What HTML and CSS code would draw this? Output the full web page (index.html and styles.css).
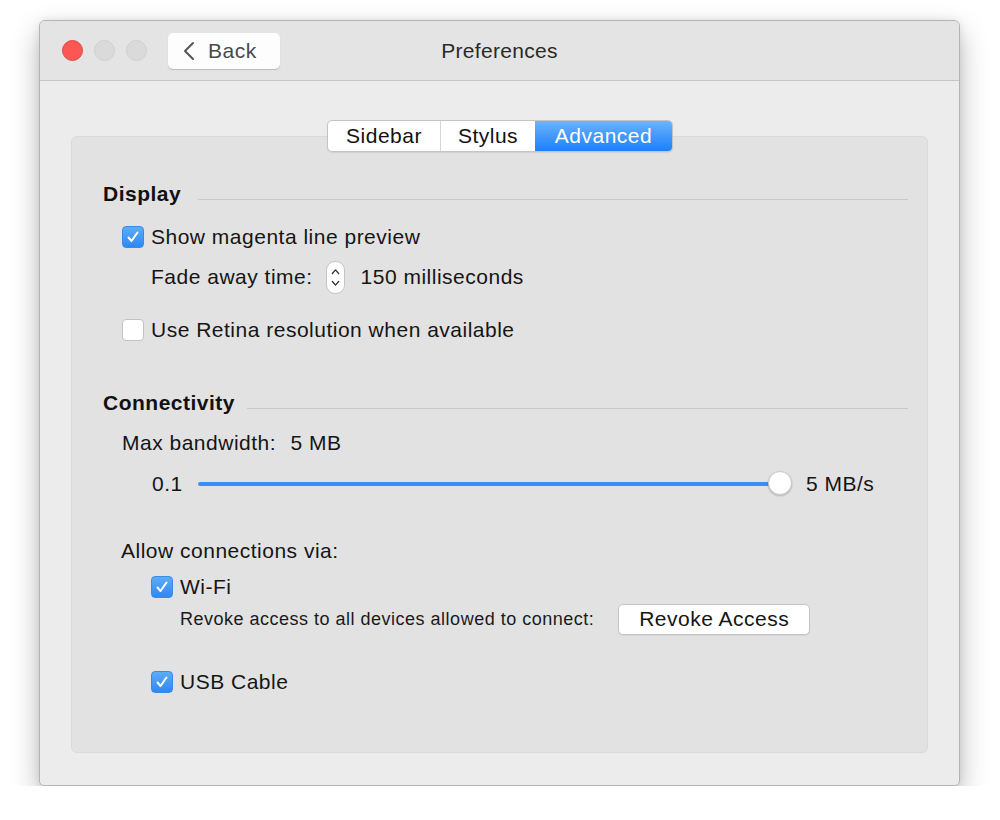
FILE: index.html
```html
<!DOCTYPE html>
<html lang="en">
<head>
  <meta charset="UTF-8">
  <title>Preferences</title>
  <link rel="stylesheet" href="styles.css">
</head>
<body>
  <div class="window">
    <!-- Title bar -->
    <div class="titlebar">
      <div class="lights">
        <span class="light red"></span>
        <span class="light"></span>
        <span class="light"></span>
      </div>
      <button class="back-btn">
        <svg width="12" height="20" viewBox="0 0 12 20"><path d="M10 2 L2 10 L10 18" fill="none" stroke="#555" stroke-width="2" stroke-linecap="round" stroke-linejoin="round"/></svg>
        Back
      </button>
      <div class="title">Preferences</div>
    </div>

    <div class="content">
      <div class="tabs">
        <div class="tab tab-sidebar">Sidebar</div>
        <div class="tab tab-stylus">Stylus</div>
        <div class="tab tab-advanced active">Advanced</div>
      </div>

      <div class="group">
        <div class="section-head">Display</div>

        <label class="check-row show-row">
          <span class="box checked"><svg width="14" height="14" viewBox="0 0 14 14"><path d="M2.5 7.5 L5.5 11 L11.5 2.5" fill="none" stroke="#fff" stroke-width="2" stroke-linecap="round" stroke-linejoin="round"/></svg></span>
          Show magenta line preview
        </label>

        <div class="fade-row">
          <span>Fade away time:</span>
          <span class="stepper">
            <svg width="19" height="33" viewBox="0 0 19 33"><path d="M6 12 L9.5 8 L13 12" fill="none" stroke="#333" stroke-width="1.5" stroke-linecap="round" stroke-linejoin="round"/><path d="M6 21 L9.5 25 L13 21" fill="none" stroke="#333" stroke-width="1.5" stroke-linecap="round" stroke-linejoin="round"/></svg>
          </span>
          <span>150 milliseconds</span>
        </div>

        <label class="check-row retina-row">
          <span class="box"></span>
          Use Retina resolution when available
        </label>

        <div class="section-head conn-head">Connectivity</div>

        <div class="bandwidth-row">Max bandwidth: <span class="bandwidth-value">5 MB</span></div>

        <div class="slider-row">
          <span class="slider-min">0.1</span>
          <span class="track"><span class="knob"></span></span>
          <span class="slider-max">5 MB/s</span>
        </div>

        <div class="allow-row">Allow connections via:</div>

        <label class="check-row wifi-row">
          <span class="box checked"><svg width="14" height="14" viewBox="0 0 14 14"><path d="M2.5 7.5 L5.5 11 L11.5 2.5" fill="none" stroke="#fff" stroke-width="2" stroke-linecap="round" stroke-linejoin="round"/></svg></span>
          Wi-Fi
        </label>

        <div class="revoke-row">
          <span class="revoke-text">Revoke access to all devices allowed to connect:</span>
          <button class="push-btn">Revoke Access</button>
        </div>

        <label class="check-row usb-row">
          <span class="box checked"><svg width="14" height="14" viewBox="0 0 14 14"><path d="M2.5 7.5 L5.5 11 L11.5 2.5" fill="none" stroke="#fff" stroke-width="2" stroke-linecap="round" stroke-linejoin="round"/></svg></span>
          USB Cable
        </label>
      </div>
    </div>
  </div>
</body>
</html>
```

FILE: styles.css
```css
body {
  margin: 0;
  background: #fff;
  font-family: "Liberation Sans", Arial, sans-serif;
  color: #1a1a1a;
  letter-spacing: 0.5px;
}

.window {
  margin: 20px 0 0 39px;
  width: 919px;
  height: 764px;
  border: 1px solid #b4b4b4;
  border-radius: 6px 6px 5px 5px;
  background: #ececec;
  box-shadow: 0 12px 28px rgba(0, 0, 0, 0.28), 0 0 8px rgba(0, 0, 0, 0.08);
  overflow: hidden;
  display: flex;
  flex-direction: column;
}

/* Title bar */
.titlebar {
  height: 59px;
  background: #e4e4e4;
  border-bottom: 1px solid #c6c6c6;
  display: flex;
  align-items: center;
  position: relative;
}

.lights {
  display: flex;
  gap: 11px;
  margin-left: 22px;
}

.light {
  width: 19px;
  height: 19px;
  border-radius: 50%;
  background: #dadada;
  border: 1px solid #cfcfcf;
}

.light.red {
  background: #fc5753;
  border-color: #df4744;
}

.back-btn {
  margin-left: 21px;
  width: 112px;
  height: 36px;
  background: #fdfdfd;
  border: none;
  border-radius: 5px;
  box-shadow: 0 1px 1px rgba(0, 0, 0, 0.18);
  display: flex;
  align-items: center;
  gap: 13px;
  padding: 0 0 0 15px;
  font-family: inherit;
  font-size: 21px;
  letter-spacing: 0.5px;
  color: #4a4a4a;
}

.title {
  position: absolute;
  left: 0;
  right: 0;
  text-align: center;
  font-size: 21px;
  letter-spacing: 0.3px;
  color: #2a2a2a;
  pointer-events: none;
}

/* Content */
.content {
  flex: 1;
  padding: 39px 31px 32px 31px;
  display: flex;
  flex-direction: column;
  align-items: center;
}

.tabs {
  display: flex;
  height: 30px;
  background: #fff;
  border: 1px solid #c4c4c4;
  border-radius: 5px;
  box-shadow: 0 1px 1px rgba(0, 0, 0, 0.08);
  position: relative;
  z-index: 1;
  overflow: hidden;
  margin-left: 1px;
}

.tab {
  font-size: 21px;
  line-height: 30px;
  text-align: center;
  color: #111;
}

.tab-sidebar {
  width: 112px;
}

.tab-stylus {
  width: 94px;
  border-left: 1px solid #d6d6d6;
}

.tab-advanced {
  width: 137px;
}

.tab.active {
  background: linear-gradient(#6db3fb, #1a80fa);
  color: #fff;
}

.group {
  align-self: stretch;
  flex: 1;
  margin-top: -16px;
  background: #e2e2e2;
  border: 1px solid #dadada;
  border-radius: 6px;
  padding: 0 19px 0 31px;
}

.section-head {
  display: flex;
  align-items: center;
  height: 32px;
  margin-top: 41px;
  font-size: 21px;
  font-weight: bold;
  color: #111;
}

.section-head::after {
  content: "";
  flex: 1;
  height: 1px;
  background: #c9c9c9;
  margin: 10px 0 0 17px;
}

.conn-head {
  margin-top: 42px;
}

.conn-head::after {
  margin-left: 12px;
}

.check-row {
  display: flex;
  align-items: center;
  gap: 7px;
  height: 30px;
  font-size: 21px;
  color: #151515;
}

.box {
  width: 20px;
  height: 20px;
  border: 1px solid #c2c2c2;
  border-radius: 4px;
  background: #fff;
  display: flex;
  align-items: center;
  justify-content: center;
}

.box.checked {
  background: linear-gradient(#5eacf8, #2e88f4);
  border-color: #3a8ae8;
}

.show-row {
  margin: 12px 0 0 19px;
}

.fade-row {
  display: flex;
  align-items: center;
  height: 36px;
  margin: 7px 0 0 48px;
  font-size: 21px;
  color: #151515;
}

.stepper {
  width: 17px;
  height: 31px;
  margin: 0 16px 0 13px;
  background: #fff;
  border: 1px solid #c4c4c4;
  border-radius: 9px;
  display: flex;
  align-items: center;
  justify-content: center;
  overflow: hidden;
}

.retina-row {
  margin: 20px 0 0 19px;
}

.bandwidth-row {
  height: 30px;
  line-height: 30px;
  margin: 9px 0 0 19px;
  font-size: 21px;
  color: #151515;
}

.bandwidth-value {
  margin-left: 8px;
}

.slider-row {
  display: flex;
  align-items: center;
  height: 30px;
  margin: 11px 0 0 49px;
  font-size: 21px;
  color: #151515;
}

.slider-min {
  width: 46px;
}

.track {
  width: 582px;
  height: 4px;
  border-radius: 2px;
  background: #3b8ef5;
  position: relative;
}

.knob {
  position: absolute;
  right: -12px;
  top: -11px;
  width: 24px;
  height: 24px;
  border-radius: 50%;
  background: #fff;
  border: 1px solid #c8c8c8;
  box-sizing: border-box;
  box-shadow: 0 1px 2px rgba(0, 0, 0, 0.22);
}

.slider-max {
  margin-left: 26px;
}

.allow-row {
  height: 30px;
  line-height: 30px;
  margin: 37px 0 0 18px;
  font-size: 21px;
  color: #151515;
}

.wifi-row {
  margin: 6px 0 0 48px;
}

.revoke-row {
  display: flex;
  align-items: center;
  height: 32px;
  margin: 1px 0 0 77px;
}

.revoke-text {
  font-size: 18px;
  color: #1a1a1a;
}

.push-btn {
  margin-left: 24px;
  width: 192px;
  height: 31px;
  background: #fff;
  border: 1px solid #c4c4c4;
  border-radius: 5px;
  box-shadow: 0 1px 1px rgba(0, 0, 0, 0.06);
  font-family: inherit;
  font-size: 21px;
  letter-spacing: 0.5px;
  color: #151515;
}

.usb-row {
  margin: 32px 0 0 48px;
}
```
